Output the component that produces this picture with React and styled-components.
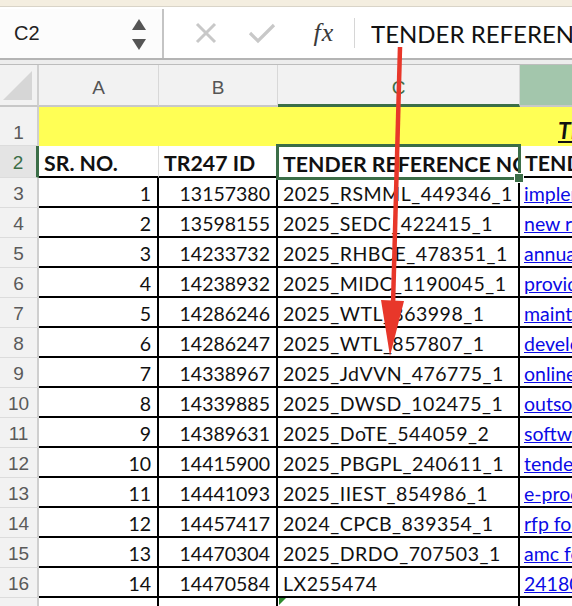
import React from 'react';
import styled, { createGlobalStyle } from 'styled-components';

const GlobalStyle = createGlobalStyle`
  html, body {
    margin: 0;
    padding: 0;
    background: #ffffff;
    overflow: hidden;
  }
  * { box-sizing: border-box; }
`;

const rows = [
  [1, '13157380', '2025_RSMML_449346_1', 'implementation of'],
  [2, '13598155', '2025_SEDC_422415_1', 'new rate contract'],
  [3, '14233732', '2025_RHBCE_478351_1', 'annual maintenance'],
  [4, '14238932', '2025_MIDC_1190045_1', 'providing services'],
  [5, '14286246', '2025_WTL_863998_1', 'maintenance of'],
  [6, '14286247', '2025_WTL_857807_1', 'development of'],
  [7, '14338967', '2025_JdVVN_476775_1', 'online system'],
  [8, '14339885', '2025_DWSD_102475_1', 'outsourcing of'],
  [9, '14389631', '2025_DoTE_544059_2', 'software for'],
  [10, '14415900', '2025_PBGPL_240611_1', 'tender for'],
  [11, '14441093', '2025_IIEST_854986_1', 'e-procurement'],
  [12, '14457417', '2024_CPCB_839354_1', 'rfp for selection'],
  [13, '14470304', '2025_DRDO_707503_1', 'amc for'],
  [14, '14470584', 'LX255474', '24180012']
];

const Page = styled.div`
  position: relative;
  width: 572px;
  height: 606px;
  overflow: hidden;
  background: #ffffff;
`;

const TopStrip = styled.div`
  height: 7px;
  background: #f4eee0;
  border-bottom: 1px solid #d9d4c8;
`;

const FormulaBar = styled.div`
  display: flex;
  height: 53px;
  background: #ffffff;
  border-bottom: 2px solid #b4b4b4;
`;

const NameBox = styled.div`
  flex: 0 0 164px;
  display: flex;
  align-items: center;
  justify-content: space-between;
  padding: 0 16px 0 14px;
  margin: 2px 0 0;
  background: #fcfcfc;
  border-right: 2px solid #c4c4c4;
  font-family: 'Liberation Sans', Arial, sans-serif;
  font-size: 20px;
  color: #222;
`;

const Spinner = styled.div`
  display: flex;
  flex-direction: column;
  gap: 9px;
  margin-top: 2px;
`;

const Controls = styled.div`
  flex: 0 0 auto;
  display: flex;
  align-items: center;
  padding-left: 18px;
`;

const IconSlot = styled.div`
  width: ${p => p.$w}px;
  display: flex;
  justify-content: center;
  align-items: center;
`;

const Fx = styled.span`
  font-family: 'Liberation Serif', 'Times New Roman', serif;
  font-style: italic;
  font-size: 26px;
  color: #3a3a3a;
  letter-spacing: 1px;
`;

const Divider = styled.div`
  width: 1px;
  height: 30px;
  background: #d6d6d6;
  margin: 0 16px 0 0;
`;

const FormulaText = styled.div`
  flex: 1 1 auto;
  min-width: 0;
  display: flex;
  align-items: center;
  font-family: Lato, 'Liberation Sans', sans-serif;
  font-size: 24px;
  color: #111;
  white-space: nowrap;
  overflow: hidden;
  padding-top: 2px;
`;

const Gap = styled.div`
  height: 5px;
  background: #ededed;
  border-bottom: 1px solid #bdbdbd;
`;

const Sheet = styled.div`
  display: grid;
  grid-template-columns: 39px 120px 119px 242px 120px;
  grid-auto-rows: 30px;
  grid-template-rows: 42px 39px 32px;
  font-family: Lato, 'Liberation Sans', sans-serif;
  font-size: 19.5px;
  color: #111;
`;

const Corner = styled.div`
  position: relative;
  background: #f2f2f2;
  border-right: 2px solid #d0d0d0;
  border-bottom: 2px solid #c8c8c8;
  &::after {
    content: '';
    position: absolute;
    right: 5px;
    bottom: 5px;
    width: 0;
    height: 0;
    border-left: 29px solid transparent;
    border-bottom: 29px solid #d6d6d6;
  }
`;

const ColHead = styled.div`
  display: flex;
  align-items: center;
  justify-content: center;
  background: ${p => (p.$hl ? '#a3c6ac' : '#f2f2f2')};
  border-right: 1px solid #d8d8d8;
  border-bottom: ${p => (p.$active ? '3px solid #3b6e47' : '2px solid #c8c8c8')};
  font-family: 'Liberation Sans', Arial, sans-serif;
  font-size: 19px;
  color: ${p => (p.$active ? '#3b6e47' : '#555')};
  padding-top: 6px;
`;

const RowHead = styled.div`
  display: flex;
  align-items: center;
  justify-content: center;
  background: ${p => (p.$active ? '#e4e4e4' : '#f2f2f2')};
  border-right: ${p => (p.$active ? '3px solid #3b6e47' : '2px solid #cfcfcf')};
  border-bottom: 1px solid #dcdcdc;
  font-family: 'Liberation Sans', Arial, sans-serif;
  font-size: 19px;
  color: ${p => (p.$active ? '#3b6e47' : '#5a5a5a')};
  padding-top: ${p => (p.$tall ? '14px' : '2px')};
`;

const TitleCell = styled.div`
  grid-column: 2 / span 4;
  background: #ffff55;
  display: flex;
  align-items: center;
  padding: 6px 0 0 519px;
  font-weight: 700;
  font-style: italic;
  text-decoration: underline;
  font-size: 23px;
  white-space: nowrap;
  overflow: hidden;
`;

const HeadCell = styled.div`
  position: relative;
  display: flex;
  align-items: center;
  padding: 3px 0 0 5px;
  font-weight: 700;
  font-size: 21.3px;
  white-space: nowrap;
  overflow: ${p => (p.$sel ? 'visible' : 'hidden')};
  border-right: 1px solid #dadada;
  border-bottom: 2px solid #000;
  ${p =>
    p.$sel &&
    `
    border: none;
    z-index: 2;
    &::before {
      content: '';
      position: absolute;
      left: -2px; top: -2px; right: -1px; bottom: -2px;
      border: 3px solid #3b6e47;
      pointer-events: none;
    }
    &::after {
      content: '';
      position: absolute;
      right: -4px; bottom: -5px;
      width: 8px; height: 8px;
      background: #3b6e47;
      border: 1px solid #fff;
    }
  `}
`;

const Clip = styled.span`
  display: block;
  overflow: hidden;
  width: 100%;
`;

const Cell = styled.div`
  position: relative;
  display: flex;
  align-items: center;
  justify-content: ${p => (p.$right ? 'flex-end' : 'flex-start')};
  padding: 2px ${p => (p.$right ? '6px' : '0')} 0 ${p => (p.$right ? '0' : '5px')};
  border-right: 2px solid #000;
  border-bottom: 2px solid #000;
  white-space: nowrap;
  overflow: hidden;
  letter-spacing: ${p => (p.$wide ? '0.5px' : '0')};
`;

const LinkCell = styled(Cell)`
  border-right: none;
  color: #0a0ae6;
  text-decoration: underline;
  padding-left: 4px;
`;

const EmptyCell = styled.div`
  position: relative;
  border-right: ${p => (p.$edge ? '2px solid #000' : 'none')};
  ${p =>
    p.$flag &&
    `
    &::before {
      content: '';
      position: absolute;
      left: 1px; top: 0;
      border-top: 7px solid #2f8a2f;
      border-right: 7px solid transparent;
    }
  `}
`;

const Overlay = styled.svg`
  position: absolute;
  left: 0;
  top: 0;
  pointer-events: none;
  z-index: 10;
`;

function Arrow() {
  return (
    <Overlay width="572" height="606" viewBox="0 0 572 606">
      <line x1="400" y1="47" x2="393" y2="305" stroke="#e8372a" strokeWidth="4.5" />
      <polygon points="381,300 404,301 390,356" fill="#e8372a" />
    </Overlay>
  );
}

export default function App() {
  return (
    <Page>
      <GlobalStyle />
      <TopStrip />
      <FormulaBar>
        <NameBox>
          <span>C2</span>
          <Spinner>
            <svg width="14" height="11" viewBox="0 0 14 11">
              <polygon points="7,0 14,11 0,11" fill="#555" />
            </svg>
            <svg width="14" height="11" viewBox="0 0 14 11">
              <polygon points="0,0 14,0 7,11" fill="#555" />
            </svg>
          </Spinner>
        </NameBox>
        <Controls>
          <IconSlot $w={48}>
            <svg width="22" height="22" viewBox="0 0 22 22">
              <path d="M2 2 L20 20 M20 2 L2 20" stroke="#c8c8c8" strokeWidth="3" fill="none" />
            </svg>
          </IconSlot>
          <IconSlot $w={64}>
            <svg width="28" height="22" viewBox="0 0 28 22">
              <path d="M2 11 L10 19 L26 3" stroke="#c8c8c8" strokeWidth="3.2" fill="none" />
            </svg>
          </IconSlot>
          <IconSlot $w={60}>
            <Fx>fx</Fx>
          </IconSlot>
          <Divider />
        </Controls>
        <FormulaText>TENDER REFERENCE NO</FormulaText>
      </FormulaBar>
      <Gap />
      <Sheet>
        <Corner />
        <ColHead>A</ColHead>
        <ColHead>B</ColHead>
        <ColHead $active>C</ColHead>
        <ColHead $hl />

        <RowHead $tall>1</RowHead>
        <TitleCell>TENDER DETAILS</TitleCell>

        <RowHead $active>2</RowHead>
        <HeadCell>SR. NO.</HeadCell>
        <HeadCell>TR247 ID</HeadCell>
        <HeadCell $sel>
          <Clip>TENDER REFERENCE NO</Clip>
        </HeadCell>
        <HeadCell>TENDER DESCRIPTION</HeadCell>

        {rows.map(([n, id, ref, desc], i) => (
          <React.Fragment key={n}>
            <RowHead>{i + 3}</RowHead>
            <Cell $right>{n}</Cell>
            <Cell $right>{id}</Cell>
            <Cell $wide>{ref}</Cell>
            <LinkCell>{desc}</LinkCell>
          </React.Fragment>
        ))}

        <RowHead>17</RowHead>
        <EmptyCell $edge />
        <EmptyCell $edge />
        <EmptyCell $edge $flag />
        <EmptyCell />
      </Sheet>
      <Arrow />
    </Page>
  );
}
